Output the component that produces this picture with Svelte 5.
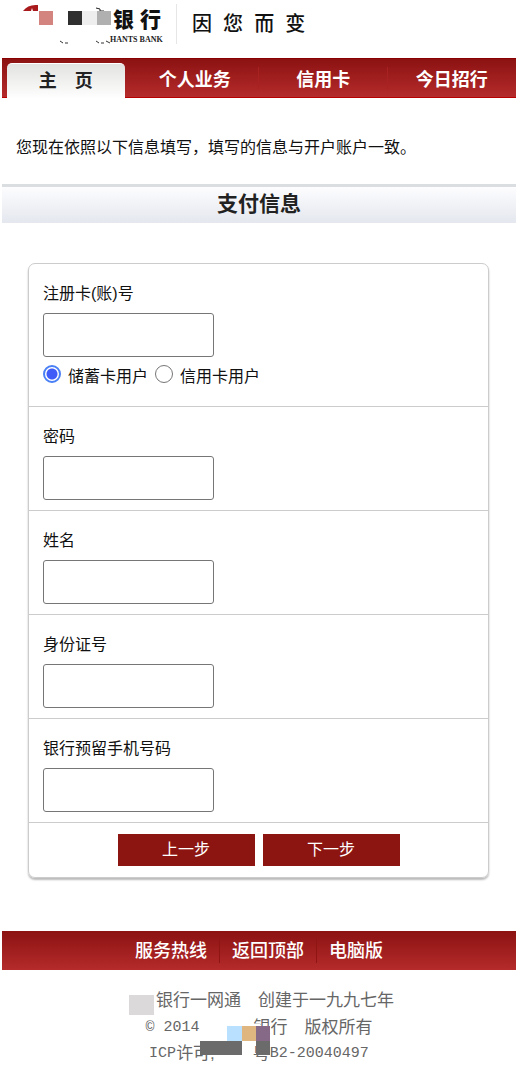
<script lang="ts">
  const tabs = ['主　页', '个人业务', '信用卡', '今日招行'];
  const cardTypes = [
    { value: 'debit', label: '储蓄卡用户' },
    { value: 'credit', label: '信用卡用户' }
  ];
  const fields = [
    { id: 'password', label: '密码', type: 'password' },
    { id: 'name', label: '姓名', type: 'text' },
    { id: 'id-number', label: '身份证号', type: 'text' },
    { id: 'phone', label: '银行预留手机号码', type: 'tel' }
  ];
  const links = ['服务热线', '返回顶部', '电脑版'];

  let activeTab = $state(0);
  let cardType = $state('debit');
</script>

<div class="page">
  <header class="header">
    <svg class="logo" width="142" height="40" viewBox="0 0 142 40">
      <path d="M0 7 Q5 0 15 1 V7 H10 L9 4 L8 7Z" fill="#a81a1c" />
      <rect x="16" y="7" width="14" height="14" fill="#d3847f" />
      <rect x="45" y="7" width="14" height="14" fill="#2f2f2f" />
      <rect x="59" y="7" width="15" height="14" fill="#eee" />
      <path d="M73 4 L77 5 V7 H81 L82 10" stroke="#222" stroke-width="1" fill="none" />
      <rect x="74" y="7" width="14" height="14" fill="#b0b0b0" />
      <path d="M37 37 l3 2 M42 39 h3 M73 37 l3 2 M78 39 h3 M83 37 l4 2" stroke="#333" stroke-width="1" />
      <text class="brand" x="90" y="23">银</text>
      <text class="brand" x="117" y="23">行</text>
      <text class="brand-en" x="87" y="38">HANTS BANK</text>
    </svg>
    <span class="slogan">因  您  而  变</span>
  </header>

  <nav class="nav">
    {#each tabs as tab, i}
      <button class="tab" class:active={activeTab === i} onclick={() => (activeTab = i)}>{tab}</button>
    {/each}
  </nav>

  <p class="notice">您现在依照以下信息填写，填写的信息与开户账户一致。</p>

  <h1 class="title">支付信息</h1>

  <form class="card" onsubmit={(e) => e.preventDefault()}>
    <div class="row">
      <label class="label" for="account">注册卡(账)号</label>
      <input class="field" id="account" type="text" />
      <div class="radios">
        {#each cardTypes as item}
          <label class="radio">
            <input type="radio" name="card-type" value={item.value} bind:group={cardType} />
            <span>{item.label}</span>
          </label>
        {/each}
      </div>
    </div>

    {#each fields as item}
      <div class="row">
        <label class="label" for={item.id}>{item.label}</label>
        <input class="field" id={item.id} type={item.type} autocomplete="off" />
      </div>
    {/each}

    <div class="actions">
      <button type="button">上一步</button>
      <button type="button">下一步</button>
    </div>
  </form>

  <footer>
    <div class="links">
      {#each links as link}
        <a href="#top">{link}</a>
      {/each}
    </div>
    <div class="legal">
      <div class="line"><span class="patch"></span>银行一网通　创建于一九九七年</div>
      <div class="line">
        <span class="latin">© 2014</span>
        <span class="gap">
          <svg width="74" height="32" viewBox="0 0 74 32">
            <rect x="0" y="0" width="60" height="17" fill="#fff" />
            <rect x="27" y="2" width="15" height="15" fill="#b9e1ff" />
            <rect x="42" y="2" width="15" height="15" fill="#dfb67f" />
            <rect x="56" y="2" width="14" height="15" fill="#866986" />
            <rect x="0" y="17" width="42" height="14" fill="#6b6b6b" />
            <rect x="56" y="17" width="14" height="14" fill="#6b6b6b" />
          </svg>
        </span>
        <span>银行　版权所有</span>
      </div>
      <div class="line">
        <span class="latin">ICP</span>
        <span>许可,</span>
        <span class="gap short"></span>
        <span>粤</span>
        <span class="latin">B2-20040497</span>
      </div>
    </div>
  </footer>
</div>

<style>
  :global(body) {
    margin: 0;
    background: #fff;
  }

  .page {
    padding: 0 1px 0 2px;
    font-family: 'Liberation Sans', 'Noto Sans CJK SC', sans-serif;
    font-size: 16px;
    line-height: 24px;
    color: #111;
  }

  button,
  input {
    font: inherit;
    box-sizing: border-box;
  }

  .header {
    display: flex;
    align-items: flex-start;
    height: 58px;
    padding: 4px 0 0 21px;
    box-sizing: border-box;
  }

  .logo {
    padding-right: 11px;
    border-right: 1px solid #e6e6e6;
  }

  .brand {
    font-family: 'Noto Sans CJK SC', sans-serif;
    font-size: 21px;
    font-weight: 900;
    fill: #111;
  }

  .brand-en {
    font-family: 'Liberation Serif', serif;
    font-size: 8px;
    font-weight: bold;
    fill: #222;
  }

  .slogan {
    padding: 8px 0 0 15px;
    font-size: 20px;
    font-weight: 500;
    white-space: pre;
  }

  .nav {
    display: grid;
    grid-template-columns: repeat(4, 1fr);
    height: 40px;
    padding-top: 4px;
    box-sizing: border-box;
    background: linear-gradient(#8c1212, #b52b2b);
    border-top: 1px solid #8a0000;
    border-bottom: 1px solid #b80000;
  }

  .tab {
    padding: 0 0 2px;
    border: 0;
    background: linear-gradient(#a82222, #a82222) right 4px / 1px 22px no-repeat;
    color: #fff;
    font-size: 18px;
    font-weight: bold;
    cursor: pointer;
  }

  .tab:last-child {
    background: none;
  }

  .tab.active {
    height: 36px;
    margin: 0 6px 0 5px;
    background: linear-gradient(#e2e2e0, #fff);
    border-top: 1px solid #fff;
    border-radius: 5px 5px 0 0;
    color: #222;
  }

  .notice {
    margin: 0;
    padding: 38px 14px 24px;
  }

  .title {
    margin: 0;
    padding: 3px 0 6px;
    border-top: 3px solid #dadee1;
    background: linear-gradient(#fdfdff, #e4e7ee);
    font-size: 21px;
    line-height: 27px;
    font-weight: bold;
    text-align: center;
    color: #222;
  }

  .card {
    margin: 40px 27px 0 26px;
    border: 1px solid #ccc;
    border-radius: 7px;
    box-shadow: 0 2px 2px #bbb;
  }

  .row {
    padding: 18px 14px 10px;
    border-bottom: 1px solid #ccc;
  }

  .label {
    display: block;
    margin-bottom: 7px;
  }

  .field {
    display: block;
    width: 171px;
    height: 44px;
    padding: 0 8px;
    border: 1px solid #767676;
    border-radius: 3px;
    background: #fff;
  }

  .radios {
    display: flex;
    gap: 7px;
    padding: 7px 0 8px;
  }

  .radio {
    display: flex;
    align-items: flex-start;
    gap: 7px;
  }

  .radio span {
    padding-top: 1px;
    line-height: 23px;
  }

  .radio input {
    appearance: none;
    width: 18px;
    height: 18px;
    margin: 1px 0 0;
    border: 1px solid #767676;
    border-radius: 50%;
    background: #fff;
  }

  .radio input:checked {
    border: 2px solid #4a80f5;
    background: radial-gradient(#3f5cf8 5px, #fff 6px);
  }

  .actions {
    display: flex;
    justify-content: center;
    gap: 8px;
    padding: 11px 0;
  }

  .actions button {
    width: 137px;
    height: 32px;
    padding: 0;
    border: 0;
    background: #8c1411;
    color: #fff;
    cursor: pointer;
  }

  .links {
    display: flex;
    justify-content: center;
    margin-top: 53px;
    padding: 8px 0 7px;
    background: linear-gradient(#8c1212, #b52b2b);
  }

  .links a {
    padding: 0 12px;
    border-right: 1px solid #8f1515;
    color: #fff;
    font-size: 18px;
    font-weight: 500;
    text-decoration: none;
  }

  .links a:last-child {
    border-right: 0;
  }

  .legal {
    padding: 18px 0 8px;
    font-size: 17px;
    color: #666;
  }

  .line {
    display: flex;
    justify-content: center;
    line-height: 26px;
    white-space: nowrap;
  }

  .latin {
    font-family: 'Liberation Mono', monospace;
    font-size: 15px;
  }

  .patch {
    width: 25px;
    height: 20px;
    margin: 7px 2px 0 5px;
    background: #dbd9da;
  }

  .gap {
    position: relative;
    width: 54px;
  }

  .gap.short {
    width: 38px;
  }

  .gap svg {
    position: absolute;
    top: 9px;
    left: 0;
  }
</style>
